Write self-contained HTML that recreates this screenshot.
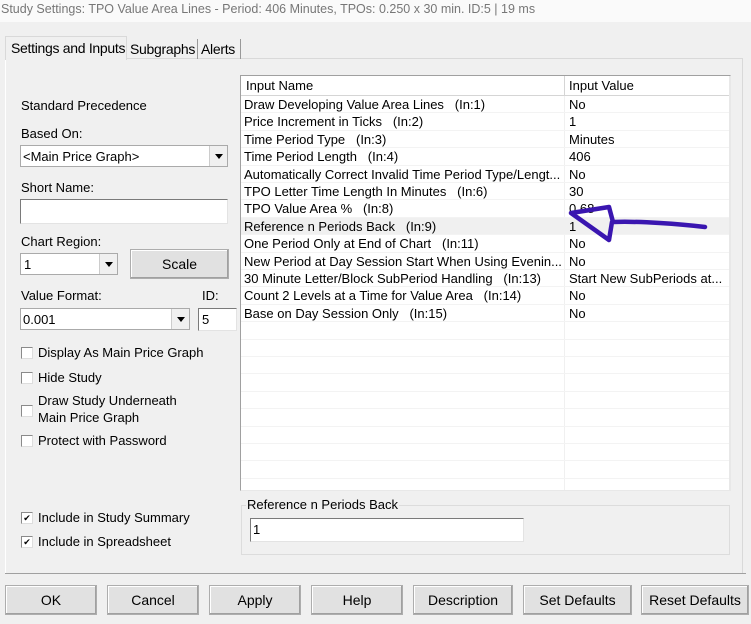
<!DOCTYPE html>
<html><head><meta charset="utf-8"><style>
*{box-sizing:border-box;margin:0;padding:0}
body{width:751px;height:624px;background:#f0f0f0;font-family:"Liberation Sans",Arial,sans-serif;font-size:13px;color:#000;position:relative;overflow:hidden}
.a{position:absolute;white-space:nowrap}
.inp{position:absolute;background:#fff;border:1px solid #7a7a7a;border-right-color:#e3e3e3;border-bottom-color:#e3e3e3}
.dd{position:absolute;background:#fff;border:1px solid #aaa}
.dd .arr{position:absolute;right:0;top:0;bottom:0;width:18px;background:#f0f0f0;border-left:1px solid #ccc}
.dd .arr:after{content:"";position:absolute;left:5px;top:8px;border-left:4px solid transparent;border-right:4px solid transparent;border-top:5px solid #000}
.btn{position:absolute;background:#e1e1e1;border:1px solid #adadad;box-shadow:inset -1px -1px 0 #a0a0a0,inset 1px 1px 0 #fff;text-align:center;font-size:14px}
.cb{position:absolute;width:12px;height:12px;background:#fff;border:1px solid #8a8a8a;border-right-color:#ddd;border-bottom-color:#ddd}
.row{position:absolute;left:0;width:488px;height:17.4px;border-bottom:1px solid #f3f3f3}
.row span{position:absolute;top:1px}
</style></head><body>
<div class="a" style="left:0;top:0;width:751px;height:22px;background:#fafafa"></div>
<div class="a" style="left:1px;top:2px;color:#777;font-size:12.5px">Study Settings: TPO Value Area Lines - Period: 406 Minutes, TPOs: 0.250 x 30 min. ID:5 | 19 ms</div>

<div class="a" style="left:5px;top:58px;width:738px;height:516px;border:1px solid #d9d9d9;border-bottom:none;border-left:1px solid #fff"></div>
<div class="a" style="left:5px;top:36px;width:122px;height:24px;background:#f0f0f0;border:1px solid #d9d9d9;border-bottom:none;padding:3px 0 0 5px;font-size:14px;letter-spacing:-0.3px">Settings and Inputs</div>
<div class="a" style="left:127px;top:39px;width:71px;height:20px;border-right:1px solid #999;padding:2px 0 0 3px;font-size:14px;letter-spacing:-0.3px">Subgraphs</div>
<div class="a" style="left:198px;top:39px;width:43px;height:20px;border-right:1px solid #999;padding:2px 0 0 3px;font-size:14px;letter-spacing:-0.3px">Alerts</div>
<div class="a" style="left:5px;top:573px;width:741px;height:1px;background:#a0a0a0"></div>

<div class="a" style="left:21px;top:98px">Standard Precedence</div>
<div class="a" style="left:21px;top:126px">Based On:</div>
<div class="dd" style="left:20px;top:145px;width:208px;height:22px"><span class="a" style="left:2px;top:3px">&lt;Main Price Graph&gt;</span><div class="arr"></div></div>
<div class="a" style="left:21px;top:180px">Short Name:</div>
<div class="inp" style="left:20px;top:199px;width:208px;height:25px"></div>
<div class="a" style="left:21px;top:234px">Chart Region:</div>
<div class="dd" style="left:20px;top:253px;width:98px;height:22px"><span class="a" style="left:3px;top:3px">1</span><div class="arr"></div></div>
<div class="btn" style="left:130px;top:249px;width:99px;height:30px;padding-top:6px">Scale</div>
<div class="a" style="left:21px;top:288px">Value Format:</div>
<div class="a" style="left:202px;top:288px">ID:</div>
<div class="dd" style="left:20px;top:308px;width:170px;height:22px"><span class="a" style="left:2px;top:3px">0.001</span><div class="arr"></div></div>
<div class="inp" style="left:198px;top:308px;width:39px;height:23px"><span class="a" style="left:3px;top:3px">5</span></div>

<div class="cb" style="left:21px;top:347px"></div><div class="a" style="left:38px;top:345px">Display As Main Price Graph</div>
<div class="cb" style="left:21px;top:372px"></div><div class="a" style="left:38px;top:370px">Hide Study</div>
<div class="cb" style="left:21px;top:405px"></div><div class="a" style="left:38px;top:393px">Draw Study Underneath</div><div class="a" style="left:38px;top:410px">Main Price Graph</div>
<div class="cb" style="left:21px;top:435px"></div><div class="a" style="left:38px;top:433px">Protect with Password</div>
<div class="cb" style="left:21px;top:512px;font-size:9px;line-height:10px;text-align:center">✔</div><div class="a" style="left:38px;top:510px">Include in Study Summary</div>
<div class="cb" style="left:21px;top:536px;font-size:9px;line-height:10px;text-align:center">✔</div><div class="a" style="left:38px;top:534px">Include in Spreadsheet</div>

<div class="a" style="left:240px;top:75px;width:491px;height:416px;background:#fff;border:1px solid #a0a0a0;border-right-color:#e8e8e8;border-bottom-color:#e8e8e8;overflow:hidden">
 <div class="a" style="left:0;top:0;width:489px;height:20px;border-bottom:1px solid #d5d5d5"></div>
 <div class="a" style="left:5px;top:2px">Input Name</div>
 <div class="a" style="left:323px;top:0;width:1px;height:20px;background:#d5d5d5"></div>
 <div class="a" style="left:328px;top:2px">Input Value</div>
 <div class="a" style="left:323px;top:20px;width:1px;height:400px;background:#f0f0f0"></div>
 <div class="a" style="left:488px;top:0;width:1px;height:416px;background:#e8e8e8"></div>
 <div class="a" style="left:0;top:20px;width:488px">
  <div class="row" style="top:0"><span style="left:3px">Draw Developing Value Area Lines&nbsp;&nbsp; (In:1)</span><span style="left:328px">No</span></div>
  <div class="row" style="top:17.4px"><span style="left:3px">Price Increment in Ticks&nbsp;&nbsp; (In:2)</span><span style="left:328px">1</span></div>
  <div class="row" style="top:34.8px"><span style="left:3px">Time Period Type&nbsp;&nbsp; (In:3)</span><span style="left:328px">Minutes</span></div>
  <div class="row" style="top:52.2px"><span style="left:3px">Time Period Length&nbsp;&nbsp; (In:4)</span><span style="left:328px">406</span></div>
  <div class="row" style="top:69.6px"><span style="left:3px">Automatically Correct Invalid Time Period Type/Lengt...</span><span style="left:328px">No</span></div>
  <div class="row" style="top:87px"><span style="left:3px">TPO Letter Time Length In Minutes&nbsp;&nbsp; (In:6)</span><span style="left:328px">30</span></div>
  <div class="row" style="top:104.4px"><span style="left:3px">TPO Value Area %&nbsp;&nbsp; (In:8)</span><span style="left:328px">0.68</span></div>
  <div class="row" style="top:121.8px;background:#f0f0f0"><span style="left:3px">Reference n Periods Back&nbsp;&nbsp; (In:9)</span><span style="left:328px">1</span></div>
  <div class="row" style="top:139.2px"><span style="left:3px">One Period Only at End of Chart&nbsp;&nbsp; (In:11)</span><span style="left:328px">No</span></div>
  <div class="row" style="top:156.6px"><span style="left:3px">New Period at Day Session Start When Using Evenin...</span><span style="left:328px">No</span></div>
  <div class="row" style="top:174px"><span style="left:3px">30 Minute Letter/Block SubPeriod Handling&nbsp;&nbsp; (In:13)</span><span style="left:328px">Start New SubPeriods at...</span></div>
  <div class="row" style="top:191.4px"><span style="left:3px">Count 2 Levels at a Time for Value Area&nbsp;&nbsp; (In:14)</span><span style="left:328px">No</span></div>
  <div class="row" style="top:208.8px"><span style="left:3px">Base on Day Session Only&nbsp;&nbsp; (In:15)</span><span style="left:328px">No</span></div>
  <div class="row" style="top:226.2px"></div><div class="row" style="top:243.6px"></div><div class="row" style="top:261px"></div>
  <div class="row" style="top:278.4px"></div><div class="row" style="top:295.8px"></div><div class="row" style="top:313.2px"></div>
  <div class="row" style="top:330.6px"></div><div class="row" style="top:348px"></div><div class="row" style="top:365.4px"></div>
  <div class="row" style="top:382.8px"></div>
 </div>
</div>

<div class="a" style="left:241px;top:505px;width:489px;height:50px;border:1px solid #dcdcdc"></div>
<div class="a" style="left:246px;top:497px;background:#f0f0f0;padding:0 1px">Reference n Periods Back</div>
<div class="inp" style="left:250px;top:518px;width:274px;height:24px"><span class="a" style="left:2px;top:3px">1</span></div>

<svg class="a" style="left:0;top:0" width="751" height="624"><path d="M705 227 C680 224 640 221 613 222 L609 207 L571 213 L609 240 L612 222" fill="none" stroke="#3a16b0" stroke-width="4.5" stroke-linecap="round" stroke-linejoin="round"/></svg>

<div class="btn" style="left:5px;top:585px;width:92px;height:30px;padding-top:6px">OK</div>
<div class="btn" style="left:107px;top:585px;width:92px;height:30px;padding-top:6px">Cancel</div>
<div class="btn" style="left:209px;top:585px;width:92px;height:30px;padding-top:6px">Apply</div>
<div class="btn" style="left:311px;top:585px;width:92px;height:30px;padding-top:6px">Help</div>
<div class="btn" style="left:413px;top:585px;width:100px;height:30px;padding-top:6px">Description</div>
<div class="btn" style="left:523px;top:585px;width:109px;height:30px;padding-top:6px">Set Defaults</div>
<div class="btn" style="left:641px;top:585px;width:108px;height:30px;padding-top:6px">Reset Defaults</div>
</body></html>
